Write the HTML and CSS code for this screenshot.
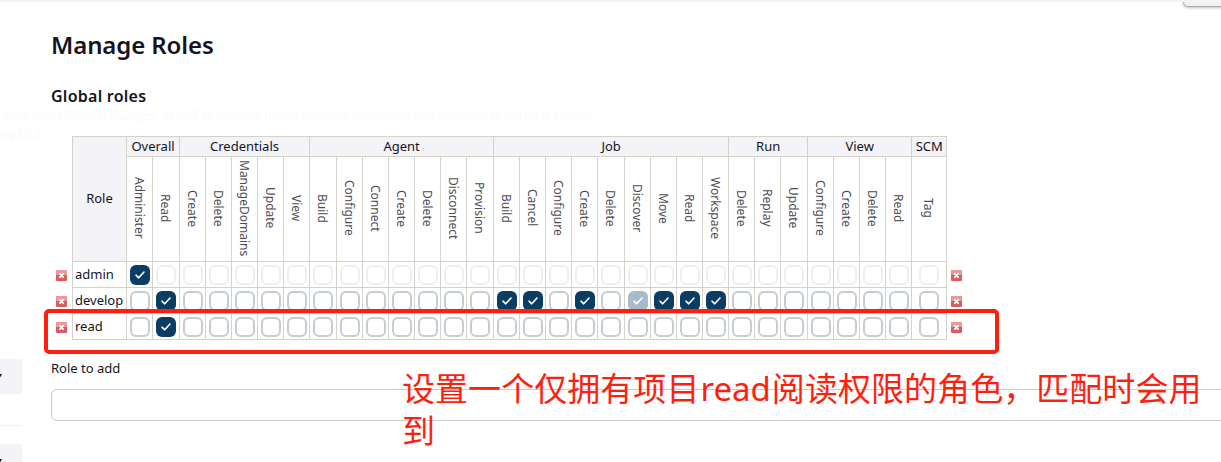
FILE: index.html
```html
<!DOCTYPE html>
<html lang="en">
<head>
<meta charset="utf-8">
<title>Manage Roles</title>
<link rel="stylesheet" href="styles.css">
</head>
<body>
<div class="page">
  <div class="corner-popup"></div>
  <aside class="side">
    <div class="side-panel"><svg width="2" height="4" viewBox="0 0 2 4"><path d="M0 0H2L0 3.5Z" fill="#14141f"/></svg></div>
    <div class="side-rule"></div>
    <div class="side-panel"><svg width="2" height="4" viewBox="0 0 2 4"><path d="M0 0H2L0 3.5Z" fill="#14141f"/></svg></div>
  </aside>
  <main class="main">
    <h1 class="title">Manage Roles</h1>
    <h2 class="subtitle">Global roles</h2>
    <table class="roles" id="roles"></table>
    <label class="label" for="role">Role to add</label>
    <input class="field" id="role" type="text">
  </main>
  <div class="ghost"><span>-wide configuration changes, as well as perform highly sensitive operations that amounts to full local system</span><span>ng OS.)</span></div>
  <div class="highlight"></div>
  <p class="note" lang="zh">设置一个仅拥有项目<span class="latin">read</span>阅读权限的角色，匹配时会用<br>到</p>
</div>
<script src="roles.js"></script>
</body>
</html>
```
FILE: styles.css
```css
* { box-sizing: border-box; }
body { margin: 0; background: #fff; color: #14141f; font-family: "Noto Sans", "Open Sans", sans-serif; }
.page { position: relative; width: 1221px; height: 462px; overflow: hidden; border-top: 2px solid #f4f4f4; display: flex; }
.side { width: 22px; padding-top: 357px; flex: none; }
.side-panel { height: 35px; background: #f3f3f8; padding-top: 15px; line-height: 0; }
.side-panel svg { display: block; }
.side-rule { height: 1px; margin: 31px 0 18px; background: #f0f0f3; }
.main { flex: none; width: 1250px; padding-left: 29px; }
.title { margin: 0; padding-top: 26px; height: 81px; font-size: 24px; line-height: 34px; font-weight: 600; letter-spacing: -0.1px; white-space: nowrap; }
.subtitle { margin: 0; height: 53px; font-size: 16px; line-height: 26px; font-weight: 600; letter-spacing: 0.25px; white-space: nowrap; }
.roles { table-layout: fixed; width: 916px; border-spacing: 0; font-size: 13px; color: #14141f; }
.roles td, .roles th { padding: 0; font-weight: 400; border: 0 solid #d3d3ca; }
.roles .cell { border-width: 1px 0 0 1px; }
.roles .end { border-left-width: 1px; }
.roles .floor td.cell { border-bottom-width: 1px; }
.c-side { width: 21px; }
.c-role { width: 54px; }
.c-26 { width: 26px; }
.c-27 { width: 27px; }
.c-35 { width: 35px; }
.groups { height: 20px; }
.groups .cell { background: #f3f3f8; line-height: 19px; text-align: center; white-space: nowrap; }
.groups .cell[rowspan] { padding-bottom: 2px; }
.perms { height: 105px; }
.perm { height: 104px; padding: 0 2px 2px 0; display: flex; align-items: center; justify-content: center; }
.perm span { writing-mode: vertical-rl; line-height: 16px; color: #4c4c55; font-size: 12px; white-space: nowrap; }
.row { height: 26px; }
.row.floor { height: 27px; }
.roles td.name { padding: 0 0 2px 2px; text-align: left; line-height: 20px; white-space: nowrap; }
.check { width: 20px; height: 20px; margin-left: 3px; border: 2px solid #c3cdd3; border-radius: 6px; background: #fff; }
.roles td:nth-child(33) .check { margin-left: 7px; }
.check.off { border-color: #edf0f2; }
.check.on { border: 0; background: #0b3c61; }
.check.implied { border: 0; background: #a8bbc8; }
.check svg, .del { display: block; }
.del { margin-left: 5px; margin-top: 2px; }
.right .del { margin-left: 4px; }
.label { display: block; margin-top: 17px; height: 32px; font-size: 13px; line-height: 22px; }
.field { display: block; width: 1240px; height: 32px; border: 1px solid #c3cdd3; border-radius: 6px; background: #fff; }
.ghost { position: absolute; left: 0; top: 105px; font-size: 12px; line-height: 18px; letter-spacing: -0.28px; color: #fbfbfb; font-weight: 500; white-space: nowrap; }
.ghost span { display: block; }
.highlight { position: absolute; left: 44px; top: 307px; width: 955px; height: 45px; border: 4px solid #ff1f0f; border-radius: 5px; }
.note { position: absolute; left: 402px; top: 364px; margin: 0; font-family: "Noto Sans CJK SC", sans-serif; font-size: 33px; line-height: 42px; letter-spacing: 0.05px; font-weight: 400; color: #ff1f0f; white-space: nowrap; }
.latin { font-family: "Noto Sans", sans-serif; letter-spacing: 0; line-height: 1; padding: 0 1px; }
.corner-popup { position: absolute; right: -10px; top: -12px; width: 48px; height: 17px; background: #f2f2f2; border: 1px solid #aaa; border-radius: 5px; box-shadow: 0 1px 3px rgba(0,0,0,.25); }
```
FILE: roles.js
```javascript
const groups = [
  ["Overall", ["Administer", "Read"]],
  ["Credentials", ["Create", "Delete", "ManageDomains", "Update", "View"]],
  ["Agent", ["Build", "Configure", "Connect", "Create", "Delete", "Disconnect", "Provision"]],
  ["Job", ["Build", "Cancel", "Configure", "Create", "Delete", "Discover", "Move", "Read", "Workspace"]],
  ["Run", ["Delete", "Replay", "Update"]],
  ["View", ["Configure", "Create", "Delete", "Read"]],
  ["SCM", ["Tag"]]
];
const roles = [
  { name: "admin", on: [0], locked: true },
  { name: "develop", on: [1, 14, 15, 17, 20, 21, 22], implied: 19 },
  { name: "read", on: [1] }
];
const wide = [1, 7, 13, 18, 25];
const perms = groups.flatMap(g => g[1]);
const tick = '<svg width="20" height="20" viewBox="0 0 20 20"><path d="M6 10.2L8.7 12.8L14 7" fill="none" stroke="#fff" stroke-width="1.6" stroke-linecap="round" stroke-linejoin="round"/></svg>';
const del = '<svg class="del" width="11" height="11" viewBox="0 0 11 11"><rect width="11" height="11" rx="1" fill="#dc5b60"/><rect width="11" height="5" rx="1" fill="#eb9a9b"/><path d="M3.4 3.4L7.6 7.6M7.6 3.4L3.4 7.6" stroke="#fff" stroke-width="1.7"/></svg>';

function box(role, i) {
  if (role.on.includes(i)) return `<div class="check on">${tick}</div>`;
  if (role.implied === i) return `<div class="check implied">${tick}</div>`;
  return `<div class="check ${role.locked ? "off" : ""}"></div>`;
}

const cols = perms.map((p, i) => `<col class="c-${i === 30 ? 35 : wide.includes(i) ? 27 : 26}">`).join("");
const head = groups.map(g => `<th class="cell" colspan="${g[1].length}">${g[0]}</th>`).join("");
const names = perms.map(p => `<td class="cell"><div class="perm"><span>${p}</span></div></td>`).join("");
const rows = roles.map((r, n) => `<tr class="row ${n === 2 ? "floor" : ""}"><td>${del}</td><td class="cell name">${r.name}</td>${perms.map((p, i) => `<td class="cell">${box(r, i)}</td>`).join("")}<td class="end right">${del}</td></tr>`).join("");

document.getElementById("roles").innerHTML =
  `<colgroup><col class="c-side"><col class="c-role">${cols}<col class="c-side"></colgroup>
  <tr class="groups"><td rowspan="2"></td><th class="cell" rowspan="2">Role</th>${head}<td class="end"></td></tr>
  <tr class="perms">${names}<td class="end"></td></tr>${rows}`;
```
